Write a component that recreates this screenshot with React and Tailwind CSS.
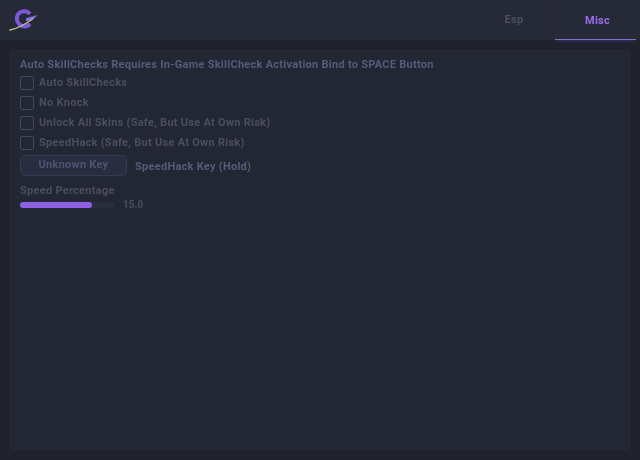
const options = [
  'Auto SkillChecks',
  'No Knock',
  'Unlock All Skins (Safe, But Use At Own Risk)',
  'SpeedHack (Safe, But Use At Own Risk)',
];

const Logo = () => (
  <svg width="32" height="24" viewBox="0 0 32 24" fill="none">
    <path d="M21 5C17 0.5 9 2 8 8C7 14 12 18 16 17.5C18 17.3 20 16 21 15" stroke="#7a58d8" strokeWidth="4" />
    <path d="M17 9L29 6L22 12L17 12Z" fill="#7f6fe0" />
    <path d="M1 21C8 19.5 17 15 24 9.5" stroke="#bdb78f" strokeWidth="1.4" strokeLinecap="round" />
  </svg>
);

const App = () => {
  return (
    <div className="flex flex-col w-[640px] h-[460px] bg-[#20232e] font-['Roboto',sans-serif] font-bold text-[11px] tracking-[0.27px] overflow-hidden blur-[0.35px]">
      <header className="flex justify-between h-10 bg-[#262936] shrink-0">
        <div className="flex items-center pl-[9px] pt-[2px]">
          <Logo />
        </div>
        <nav className="flex pr-[4px]">
          <div className="flex justify-center w-[82px] pt-[12px] text-[#4c5062]">Esp</div>
          <div className="flex justify-center w-[81px] pt-[13px] pl-[4px] text-[#9b6cf0] border-b border-[#8070c4] shadow-[0_3px_3px_-2px_rgba(110,70,200,0.4)]">Misc</div>
        </nav>
      </header>
      <main className="flex-1 m-[10px] border border-[#272a39] rounded-[3px] bg-[#232633] pl-[9px] pt-[7px]">
        <p className="text-[#565b7a] leading-[14px]">
          Auto SkillChecks Requires In-Game SkillCheck Activation Bind to SPACE Button
        </p>
        <div className="flex flex-col gap-[5px] mt-[3px]">
          {options.map((label) => (
            <label key={label} className="flex items-center gap-[5px] h-[15px] text-[#4a4e60]">
              <span className="w-[14px] h-[14px] rounded-[2px] border border-[#444857]"></span>
              <span className="pt-[1px]">{label}</span>
            </label>
          ))}
        </div>
        <div className="flex items-center gap-[8px] mt-[5px]">
          <button className="w-[107px] h-[21px] rounded-[5px] border border-[#363a4e] bg-[#292d3f] text-[#4e5374]">
            Unknown Key
          </button>
          <span className="pt-[3px] text-[#565b7a]">SpeedHack Key (Hold)</span>
        </div>
        <div className="mt-[8px] text-[#4a4e60] leading-[14px]">Speed Percentage</div>
        <div className="flex items-center gap-[8px]">
          <div className="w-[95px] h-[6px] rounded-full bg-[#2a2d3b]">
            <div className="h-full rounded-full bg-[#8e60e6]" style={{ width: '76%' }}></div>
          </div>
          <span className="text-[#4a4e60] text-[10px] leading-[14px] tracking-normal">15.0</span>
        </div>
      </main>
    </div>
  );
};

export default App;
